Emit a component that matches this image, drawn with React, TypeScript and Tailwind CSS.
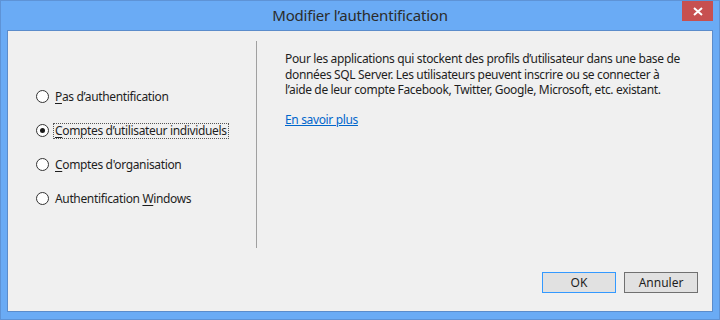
import React, { useState } from 'react';

const options = [
  { id: 'none', pre: '', key: 'P', post: "as d\u2019authentification" },
  { id: 'individual', pre: '', key: 'C', post: "omptes d\u2019utilisateur individuels" },
  { id: 'org', pre: '', key: 'C', post: "omptes d'organisation" },
  { id: 'windows', pre: 'Authentification ', key: 'W', post: 'indows' },
];

const Radio = ({ checked }: { checked: boolean }) => (
  <span className="w-[13px] h-[13px] rounded-full border border-[#333333] bg-white flex items-center justify-center shrink-0">
    {checked && <span className="w-[5px] h-[5px] rounded-full bg-[#1a1a1a]" />}
  </span>
);

const App = () => {
  const [selected, setSelected] = useState('individual');

  return (
    <div
      className="w-[720px] h-[320px] bg-[#6aabf5] border border-[#5e93d6] flex flex-col text-[#1e1e1e]"
      style={{ fontFamily: '"Noto Sans", "Open Sans", sans-serif' }}
    >
      {/* title bar */}
      <div className="h-[29px] relative flex items-center justify-center">
        <span className="text-[15px] text-[#2b2b2b] tracking-[-0.2px]">Modifier l&rsquo;authentification</span>
        <button className="absolute right-[6px] top-0 w-[31px] h-[20px] bg-[#c75050] flex items-center justify-center">
          <svg width="10" height="9" viewBox="0 0 10 9">
            <path d="M1 1 L9 8 M9 1 L1 8" stroke="white" strokeWidth="2" />
          </svg>
        </button>
      </div>

      {/* content */}
      <div className="ml-[6px] mr-[6px] mb-[7px] flex-1 bg-[#f0f0f0] border border-[#5b8ccb] flex flex-col">
        <div className="flex flex-1 pt-[10px]">
          <div className="w-[248px] flex flex-col gap-[19px] pl-[28px] pt-[48px]">
            {options.map((o) => (
              <label
                key={o.id}
                onClick={() => setSelected(o.id)}
                className="flex items-center gap-[5px] h-[15px] cursor-default"
              >
                <Radio checked={selected === o.id} />
                <span
                  className={`text-[12px] leading-[14px] px-[1px] tracking-[-0.35px] ${
                    selected === o.id ? 'outline outline-1 outline-dotted outline-[#555555]' : ''
                  }`}
                >
                  {o.pre}
                  <span className="underline underline-offset-2">{o.key}</span>
                  {o.post}
                </span>
              </label>
            ))}
          </div>
          <div className="w-px bg-[#a0a0a0] mb-[21px]" />
          <div className="flex-1 pl-[28px] pr-[20px] pt-[10px] text-[12px] leading-[15.5px] tracking-[-0.35px]">
            <p>
              Pour les applications qui stockent des profils d&rsquo;utilisateur dans une base de
              <br />
              données SQL Server. Les utilisateurs peuvent inscrire ou se connecter à
              <br />
              l&rsquo;aide de leur compte Facebook, Twitter, Google, Microsoft, etc. existant.
            </p>
            <a href="#" className="inline-block mt-[14px] text-[#0066cc] underline">
              En savoir plus
            </a>
          </div>
        </div>
        <div className="h-[42px] flex justify-end items-start gap-[8px] pr-[14px] pt-[3px]">
          <button className="w-[74px] h-[21px] bg-[#e1e1e1] border border-[#3399ff] text-[12px] leading-none">
            OK
          </button>
          <button className="w-[74px] h-[21px] bg-[#e1e1e1] border border-[#707070] text-[12px] leading-none">
            Annuler
          </button>
        </div>
      </div>
    </div>
  );
};

export default App;
